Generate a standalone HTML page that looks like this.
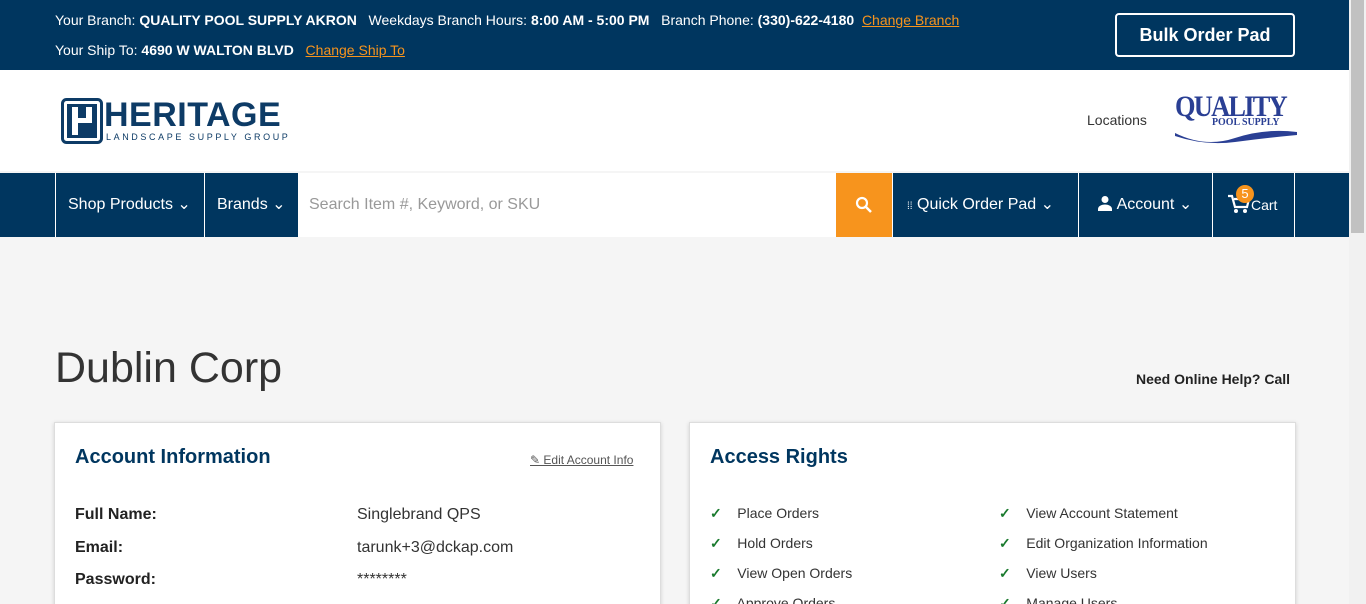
<!DOCTYPE html>
<html style="overflow:hidden;height:604px"><head><style>
*{margin:0;padding:0;box-sizing:border-box}
body{width:1366px;height:604px;overflow:hidden;background:#f5f5f5;font-family:"Liberation Sans",sans-serif;position:relative;color:#333}
.top{position:absolute;left:0;top:0;width:1349px;height:70px;background:#00365f;color:#fff;font-size:14px}
.top .l1{position:absolute;left:55px;top:12px;white-space:nowrap}
.top .l2{position:absolute;left:55px;top:42px;white-space:nowrap}
.top a{color:#f7941d;text-decoration:underline}
.bop{position:absolute;left:1115px;top:13px;width:180px;height:44px;border:2px solid #fff;border-radius:4px;font-weight:bold;font-size:18px;text-align:center;line-height:40px}
.hdr{position:absolute;left:0;top:70px;width:1349px;height:101px;background:#fff}
.nav{position:absolute;left:0;top:173px;width:1349px;height:64px;background:#00365f;color:#fff;font-size:16px}
.nav div{position:absolute;top:0;height:64px;line-height:64px;border-left:1px solid #fff;white-space:nowrap}
.sb{position:absolute;left:1349px;top:0;width:17px;height:604px;background:#f1f1f1}
.sb div{position:absolute;left:2px;top:0;width:13px;height:233px;background:#c1c1c1}
.card{position:absolute;top:422px;height:200px;background:#fff;border:1px solid #ddd;box-shadow:0 1px 4px rgba(0,0,0,.15)}
.card h2{position:absolute;left:20px;top:23px;font-size:20px;color:#00365f}
.row{position:absolute;font-size:16px;white-space:nowrap}
.ck{color:#1a7a2e;font-weight:bold}
</style></head><body>
<div class="top">
<div class="l1">Your Branch: <b>QUALITY POOL SUPPLY AKRON</b> &nbsp; Weekdays Branch Hours: <b>8:00 AM - 5:00 PM</b> &nbsp; Branch Phone: <b>(330)-622-4180</b> &nbsp;<a>Change Branch</a></div>
<div class="l2">Your Ship To: <b>4690 W WALTON BLVD</b> &nbsp; <a>Change Ship To</a></div>
<div class="bop">Bulk Order Pad</div>
</div>
<div class="hdr">
<svg style="position:absolute;left:61px;top:28px" width="42" height="46"><rect x="1.5" y="1.5" width="39" height="43" rx="4" fill="none" stroke="#0d3b66" stroke-width="3"/><rect x="6" y="6" width="30" height="34" fill="#0d3b66"/><rect x="11" y="9" width="6" height="28" fill="#fff"/><rect x="25" y="9" width="6" height="14" fill="#fff"/><rect x="11" y="20" width="20" height="5" fill="#fff"/></svg>
<div style="position:absolute;left:104px;top:26px;font-size:34px;font-weight:bold;color:#0d3b66;letter-spacing:0.5px">HERITAGE</div>
<div style="position:absolute;left:106px;top:62px;font-size:9px;color:#0d3b66;letter-spacing:2.6px">LANDSCAPE SUPPLY GROUP</div>
<div style="position:absolute;left:1087px;top:42px;font-size:14px;color:#333">Locations</div>
<div style="position:absolute;left:1175px;top:20px;font-family:'Liberation Serif',serif;font-weight:bold;font-size:30px;color:#2a3f94;letter-spacing:-2px;transform:scaleX(0.88);transform-origin:left">QUALITY</div>
<div style="position:absolute;left:1212px;top:46px;font-family:'Liberation Serif',serif;font-weight:bold;font-size:11px;color:#2a3f94;transform:scaleX(0.9);transform-origin:left">POOL SUPPLY</div>
<svg style="position:absolute;left:1175px;top:58px" width="122" height="20"><path d="M0 5 Q30 20 60 10 T122 4 L122 7 Q90 10 60 14 T0 8Z" fill="#2a3f94"/></svg>
</div>
<div class="nav">
<div style="left:55px;width:150px;padding-left:12px">Shop Products ⌄</div>
<div style="left:204px;width:95px;padding-left:12px">Brands ⌄</div>
<div style="left:298px;width:538px;background:#fff;color:#999;padding-left:11px;border:none">Search Item #, Keyword, or SKU</div>
<div style="left:836px;width:56px;background:#f7941d;border:none;text-align:center"><svg width="18" height="18" viewBox="0 0 18 18" style="vertical-align:middle"><circle cx="7" cy="7" r="5" fill="none" stroke="#fff" stroke-width="2.2"/><path d="M11 11l5 5" stroke="#fff" stroke-width="2.5"/></svg></div>
<div style="left:892px;width:187px;padding-left:14px"><span style="font-size:10px">⁞⁞</span> Quick Order Pad ⌄</div>
<div style="left:1078px;width:135px;padding-left:18px"><svg width="16" height="16" viewBox="0 0 16 16" style="vertical-align:-2px"><circle cx="8" cy="4.5" r="3.5" fill="#fff"/><path d="M1 16v-2c0-3 4-4.5 7-4.5s7 1.5 7 4.5v2z" fill="#fff"/></svg> Account ⌄</div>
<div style="left:1212px;width:83px;border-right:1px solid #fff;padding-left:14px;font-size:14px"><svg width="24" height="22" viewBox="0 0 24 22" style="vertical-align:-5px"><path d="M1 3h4l3 11h12l2-8H7" fill="none" stroke="#fff" stroke-width="2.2"/><circle cx="9" cy="18" r="2" fill="#fff"/><circle cx="18" cy="18" r="2" fill="#fff"/></svg>Cart
<span style="position:absolute;left:23px;top:12px;width:18px;height:18px;border-radius:50%;background:#f7941d;font-size:13px;line-height:18px;text-align:center">5</span></div>
</div>
<div style="position:absolute;left:55px;top:344px;font-size:43px;color:#333">Dublin Corp</div>
<div style="position:absolute;left:1136px;top:371px;font-size:14px;font-weight:bold;color:#222">Need Online Help? Call</div>
<div class="card" style="left:54px;width:607px">
<h2>Account Information</h2>
<div class="row" style="left:475px;top:30px;font-size:12px;color:#555;text-decoration:underline">✎ Edit Account Info</div>
<div class="row" style="left:20px;top:83px;font-weight:bold;color:#222">Full Name:</div><div class="row" style="left:302px;top:83px">Singlebrand QPS</div>
<div class="row" style="left:20px;top:116px;font-weight:bold;color:#222">Email:</div><div class="row" style="left:302px;top:116px">tarunk+3@dckap.com</div>
<div class="row" style="left:20px;top:148px;font-weight:bold;color:#222">Password:</div><div class="row" style="left:302px;top:148px">********</div>
</div>
<div class="card" style="left:689px;width:607px">
<h2>Access Rights</h2>
<div class="row" style="left:20px;top:75px;font-size:14px;line-height:30px"><span class="ck">✓</span>&nbsp;&nbsp;&nbsp; Place Orders<br><span class="ck">✓</span>&nbsp;&nbsp;&nbsp; Hold Orders<br><span class="ck">✓</span>&nbsp;&nbsp;&nbsp; View Open Orders<br><span class="ck">✓</span>&nbsp;&nbsp;&nbsp; Approve Orders</div>
<div class="row" style="left:309px;top:75px;font-size:14px;line-height:30px"><span class="ck">✓</span>&nbsp;&nbsp;&nbsp; View Account Statement<br><span class="ck">✓</span>&nbsp;&nbsp;&nbsp; Edit Organization Information<br><span class="ck">✓</span>&nbsp;&nbsp;&nbsp; View Users<br><span class="ck">✓</span>&nbsp;&nbsp;&nbsp; Manage Users</div>
</div>
<div class="sb"><div></div></div>
</body></html>
